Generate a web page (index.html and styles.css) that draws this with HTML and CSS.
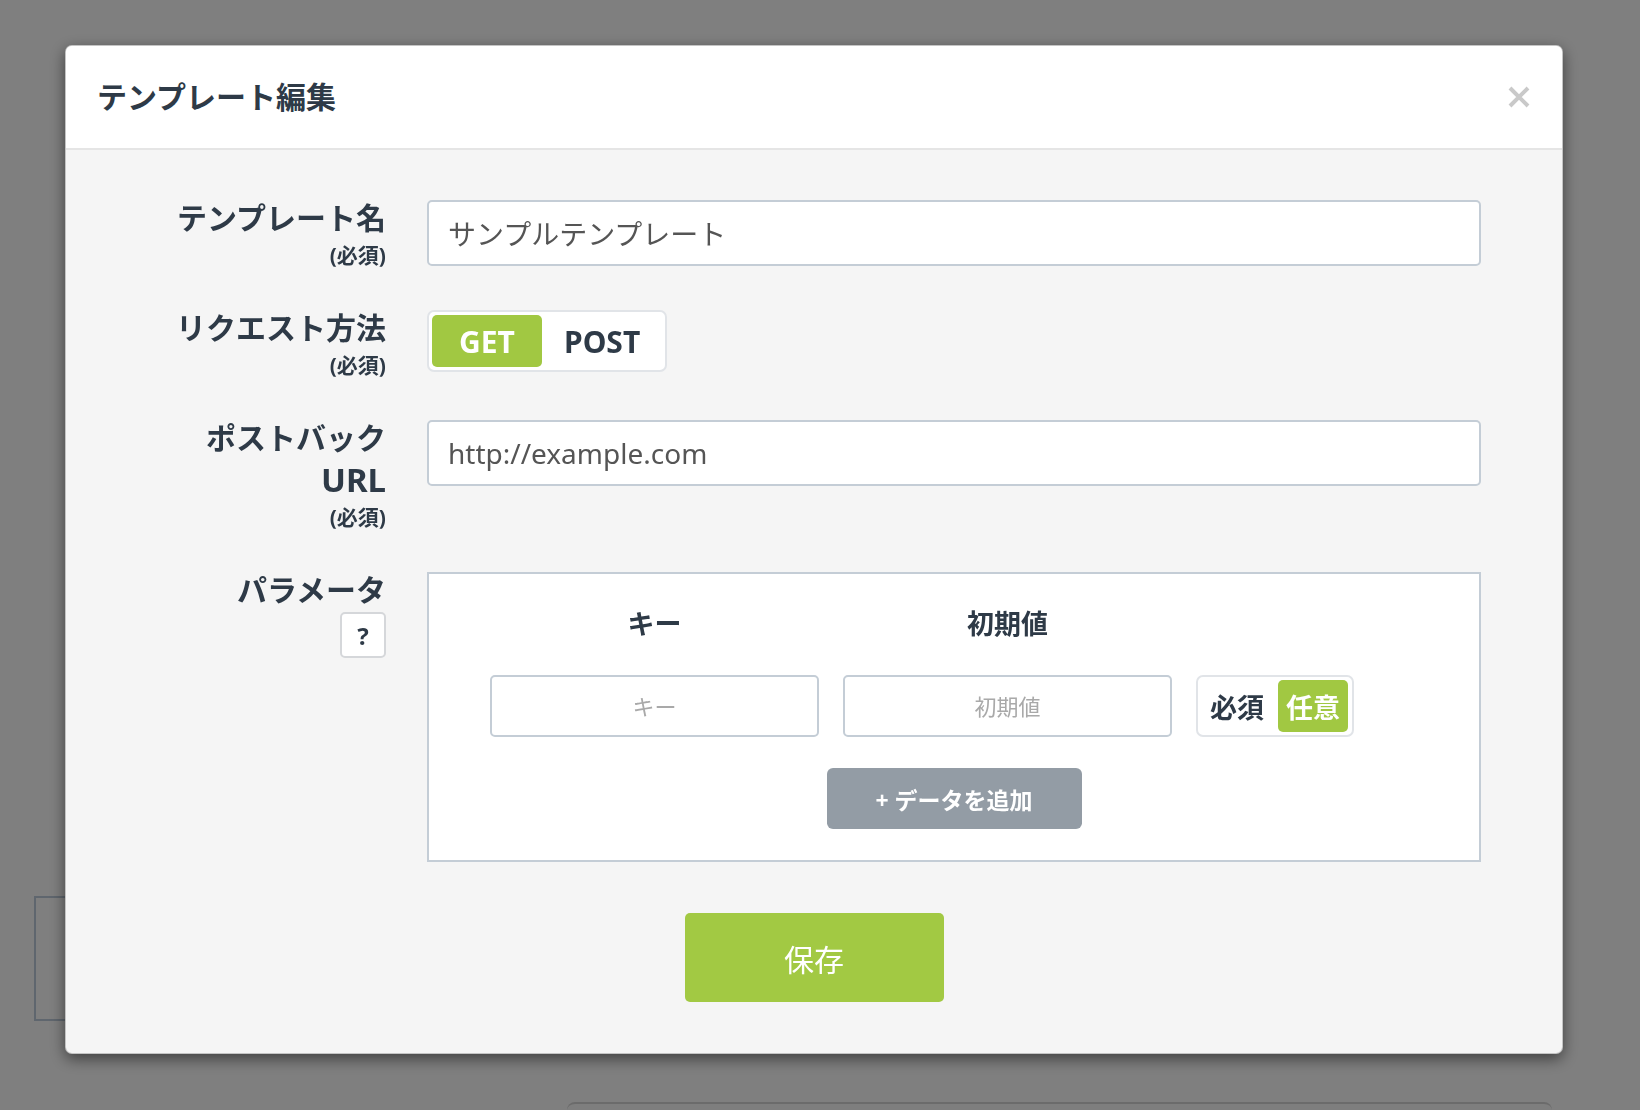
FILE: index.html
```html
<!DOCTYPE html>
<html lang="ja">
<head>
<meta charset="utf-8">
<title>テンプレート編集</title>
<link rel="stylesheet" href="styles.css">
</head>
<body>
<div class="page">
  <div class="side-box"></div>
  <div class="bottom-panel"></div>
</div>

<div class="backdrop">
  <div class="modal">
    <div class="modal-header">
      <h2 class="modal-title">テンプレート編集</h2>
      <button class="close" aria-label="閉じる">
        <svg width="22" height="22" viewBox="0 0 22 22"><path d="M2 2L20 20M20 2L2 20" stroke="#c9c9c9" stroke-width="4" fill="none"/></svg>
      </button>
    </div>
    <div class="modal-body">
      <div class="form">
        <div class="form-row">
          <div class="form-label">テンプレート名<span class="req">(必須)</span></div>
          <div class="form-control"><input class="text-input" type="text" value="サンプルテンプレート"></div>
        </div>
        <div class="form-row">
          <div class="form-label">リクエスト方法<span class="req">(必須)</span></div>
          <div class="form-control">
            <div class="seg">
              <button class="seg-btn active">GET</button>
              <button class="seg-btn">POST</button>
            </div>
          </div>
        </div>
        <div class="form-row">
          <div class="form-label">ポストバック<span class="latin">URL</span><span class="req">(必須)</span></div>
          <div class="form-control"><input class="text-input" type="text" value="http://example.com"></div>
        </div>
        <div class="form-row">
          <div class="form-label"><div>パラメータ</div><button class="help">?</button></div>
          <div class="form-control">
            <div class="params">
              <div class="param-grid">
                <div class="param-head">キー</div>
                <div class="param-head">初期値</div>
                <div></div>
                <input class="param-input" type="text" placeholder="キー">
                <input class="param-input" type="text" placeholder="初期値">
                <div class="seg seg-small">
                  <button class="seg-btn">必須</button>
                  <button class="seg-btn active">任意</button>
                </div>
              </div>
              <button class="btn-add">+ データを追加</button>
            </div>
          </div>
        </div>
      </div>
      <div class="actions">
        <button class="btn-save">保存</button>
      </div>
    </div>
  </div>
</div>
</body>
</html>
```

FILE: styles.css
```css
html {
  overflow: hidden;
}

body {
  margin: 0;
  background: #ffffff;
  font-family: "Noto Sans", "Noto Sans CJK JP", sans-serif;
  color: #2e3a47;
}

button,
input {
  font-family: inherit;
}

/* page behind the overlay */
.page {
  display: flex;
  flex-direction: column;
  padding: 896px 0 0 34px;
}

.side-box {
  width: 300px;
  height: 121px;
  border: 2px solid #bfcddc;
}

.bottom-panel {
  margin: 81px 0 0 533px;
  width: 985px;
  height: 60px;
  border-top: 2px solid #d6d6d6;
  border-radius: 8px 8px 0 0;
  background: #fcfcfc;
}

/* overlay + modal */
.backdrop {
  position: fixed;
  inset: 0;
  background: rgba(0, 0, 0, 0.5);
}

.modal {
  margin: 45px 0 0 65px;
  width: 1498px;
  box-sizing: border-box;
  background: #f5f5f5;
  border: 1px solid rgba(0, 0, 0, 0.2);
  border-radius: 7px;
  box-shadow: 0 5px 15px rgba(0, 0, 0, 0.5);
  overflow: hidden;
}

.modal-header {
  height: 104px;
  box-sizing: border-box;
  background: #ffffff;
  border-bottom: 2px solid #e5e5e5;
  display: flex;
  align-items: center;
  justify-content: space-between;
  padding: 0 32px 0 31px;
}

.modal-title {
  margin: 0;
  font-size: 30px;
  line-height: 40px;
  font-weight: bold;
  color: #2e3a47;
}

.close {
  border: none;
  background: none;
  padding: 0;
  width: 22px;
  height: 22px;
  display: flex;
}

.modal-body {
  padding: 50px 0 51px;
}

.form {
  display: flex;
  flex-direction: column;
  gap: 39px;
  padding-right: 81px;
}

.form-row {
  display: flex;
  align-items: flex-start;
  gap: 41px;
}

.form-label {
  width: 320px;
  flex: none;
  box-sizing: border-box;
  padding-left: 95px;
  margin-top: -3px;
  text-align: right;
  font-size: 30px;
  line-height: 42px;
  font-weight: bold;
  color: #2e3a47;
}

.form-label .latin {
  display: block;
  font-size: 33px;
}

.form-label .req {
  display: block;
  font-size: 21px;
  line-height: 32px;
}

.form-control {
  flex: 1;
  min-width: 0;
}

.text-input {
  display: block;
  width: 100%;
  height: 66px;
  box-sizing: border-box;
  border: 2px solid #c4cdd6;
  border-radius: 5px;
  background: #ffffff;
  padding: 0 19px;
  font-size: 28px;
  color: #555555;
  outline: none;
}

/* segmented toggles */
.seg {
  display: inline-flex;
  height: 62px;
  box-sizing: border-box;
  padding: 3px;
  border: 2px solid #e1e4e8;
  border-radius: 7px;
  background: #ffffff;
}

.seg-btn {
  min-width: 110px;
  padding: 0 22px;
  border: none;
  border-radius: 5px;
  background: transparent;
  font-size: 30px;
  font-weight: bold;
  color: #2e3a47;
}

.seg-btn.active {
  background: #a1c842;
  color: #ffffff;
}

.seg-small {
  gap: 6px;
  padding: 3px 4px;
  align-self: center;
}

.seg-small .seg-btn {
  min-width: 0;
  padding: 0 8px;
  font-size: 27px;
}

.help {
  display: inline-block;
  vertical-align: top;
  margin-top: 1px;
  width: 46px;
  height: 46px;
  box-sizing: border-box;
  border: 2px solid #d5d7da;
  border-radius: 5px;
  background: #ffffff;
  padding: 0;
  font-size: 24px;
  font-weight: bold;
  color: #2e3a47;
}

/* parameters box */
.params {
  border: 2px solid #c4cdd6;
  background: #ffffff;
  padding: 32px 0 31px;
}

.param-grid {
  display: grid;
  grid-template-columns: 329px 329px auto;
  column-gap: 24px;
  row-gap: 33px;
  padding-left: 61px;
  justify-content: start;
}

.param-head {
  text-align: center;
  font-size: 27px;
  line-height: 36px;
  font-weight: bold;
  color: #2e3a47;
}

.param-input {
  height: 62px;
  box-sizing: border-box;
  border: 2px solid #c4cdd6;
  border-radius: 5px;
  background: #ffffff;
  text-align: center;
  font-size: 22px;
  color: #555555;
  outline: none;
}

.param-input::placeholder {
  color: #a9a9a9;
}

.btn-add {
  display: block;
  margin: 31px auto 0;
  width: 255px;
  height: 61px;
  border: none;
  border-radius: 6px;
  background: #939ca5;
  color: #ffffff;
  font-size: 23px;
  font-weight: bold;
}

.actions {
  display: flex;
  justify-content: center;
  margin-top: 51px;
}

.btn-save {
  width: 259px;
  height: 89px;
  border: none;
  border-radius: 5px;
  background: #a2c943;
  color: #ffffff;
  font-size: 30px;
  font-weight: normal;
}
```
